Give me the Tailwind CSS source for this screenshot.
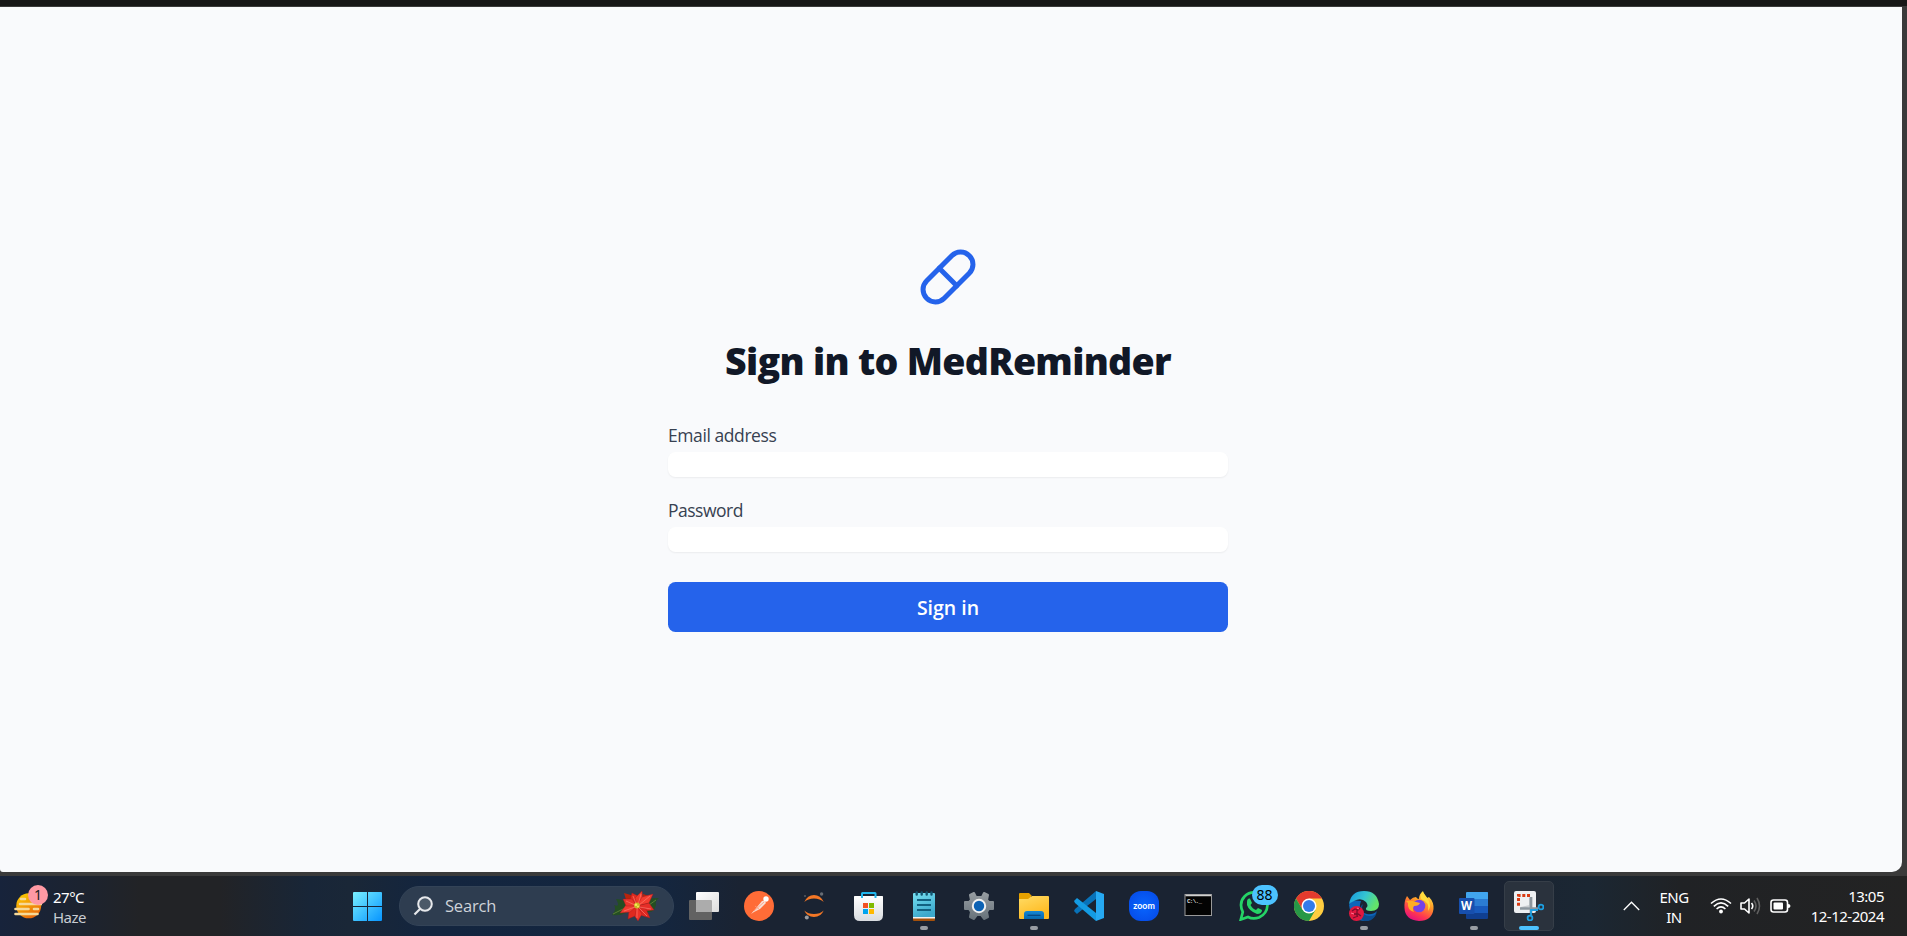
<!DOCTYPE html>
<html lang="en">
<head>
<meta charset="utf-8">
<title>MedReminder</title>
<script src="https://cdn.jsdelivr.net/npm/@tailwindcss/browser@4"></script>
</head>
<body class="flex h-[936px] w-[1907px] flex-col overflow-hidden bg-[#3a3a3a] font-['Open_Sans','Noto_Sans',sans-serif]">
<div class="h-1.5 w-full shrink-0 bg-[#171717]"></div>
<main class="mt-px flex h-[865px] w-[1902px] shrink-0 flex-col items-center rounded-br-[10px] rounded-bl-[3px] bg-[#f9fafc] pr-[6px]">
  <svg class="mt-[240px] size-[60px]" viewBox="0 0 24 24" fill="none" stroke="#2563eb" stroke-width="2" stroke-linecap="round" stroke-linejoin="round"><path d="m10.5 20.5 10-10a4.95 4.95 0 1 0-7-7l-10 10a4.95 4.95 0 1 0 7 7Z"/><path d="m8.5 8.5 7 7"/></svg>
  <h1 class="mt-[31px] h-[45px] text-[37.5px] leading-[45px] font-extrabold tracking-[-0.7px] whitespace-nowrap text-[#111827]">Sign in to MedReminder</h1>
  <form class="mt-[39px] flex w-[560px] flex-col">
    <label class="h-[25px] pt-px text-[17.5px] leading-[25px] font-medium tracking-[-0.42px] text-[#374151]">Email address</label>
    <input type="email" class="mt-[5px] h-[25px] rounded-[7.5px] bg-white shadow-[0_1px_2px_rgba(0,0,0,0.06)]">
    <label class="mt-5 h-[25px] pt-px text-[17.5px] leading-[25px] font-medium tracking-[-0.5px] text-[#374151]">Password</label>
    <input type="password" class="mt-[5px] h-[25px] rounded-[7.5px] bg-white shadow-[0_1px_2px_rgba(0,0,0,0.06)]">
    <button type="button" class="mt-[30px] h-[50px] rounded-[7.5px] bg-[#2563eb] pt-px text-[19.5px] leading-[50px] font-semibold text-white">Sign in</button>
  </form>
</main>
<footer class="mt-1 flex h-[60px] w-full shrink-0 items-center bg-[linear-gradient(90deg,#17233b_0px,#1c2330_80px,#222326_140px,#222326_220px,#182638_310px,#1a2737_350px,#13253f_430px,#14263f_660px,#1a2332_740px,#1a2332_1500px,#1b2733_1590px,#202225_1680px,#232323_1907px)]">
  <div class="relative flex w-[353px] items-center pl-[14px]">
    <svg class="size-[28px]" viewBox="0 0 28 28"><defs><linearGradient id="sun" x1="0" y1="0" x2=".6" y2="1"><stop stop-color="#ffd500"/><stop offset="1" stop-color="#e9690b"/></linearGradient></defs><circle cx="14.7" cy="13.8" r="12.5" fill="url(#sun)"/><g stroke="#f6d999" stroke-width="2.6" stroke-linecap="round"><path d="M7 7h4M6 12h22M1.500 17h13M20 17h4M1.500 22h22"/></g></svg>
    <div class="absolute top-[-1px] left-7 size-5 rounded-full bg-[#ff99a4] text-center font-['Noto_Sans'] text-[14px] leading-5 text-[#222]">1</div>
    <div class="ml-[11px] flex flex-col pt-px font-['Noto_Sans'] text-[15px] leading-5 tracking-[-0.5px] text-white"><span>27°C</span><span class="text-[#c9cdd2]">Haze</span></div>
  </div>
  <svg class="size-[29px]" viewBox="0 0 29 29"><defs><linearGradient id="win" x1="0" y1="0" x2="29" y2="29" gradientUnits="userSpaceOnUse"><stop stop-color="#79f0ff"/><stop offset="1" stop-color="#0795ff"/></linearGradient></defs><path fill="url(#win)" d="M1 0h13v14H0V1q0-1 1-1zM15 0h13q1 0 1 1v13H15zM0 15h14v14H1q-1 0-1-1zM15 15h14v13q0 1-1 1H15z"/></svg>
  <div class="ml-[17px] flex h-10 w-[275px] items-center rounded-full border border-[#334357] bg-[#2e3d50]">
    <svg class="ml-[13px] size-5" viewBox="0 0 20 20" fill="none" stroke="#e7e9ec" stroke-width="2"><circle cx="12" cy="8" r="6.8" fill="#4b5968"/><path d="M7.200 12.800L1.500 18.500" stroke-width="2.200"/></svg>
    <span class="ml-3 pt-px text-[16.500px] tracking-[-0.2px] text-[#ced3d9]">Search</span>
    <svg class="ml-auto mr-[14px] h-[30px] w-[47px]" viewBox="0 0 47 30">
      <path fill="#244e23" d="M0 24Q5 18 2 14Q9 17 4 8Q13 8 19 16Q14 26 0 24zM27 12Q34 7 47 7Q43 10 44 14Q42 22 36 21Q34 25 29 20z"/>
      <path d="M1 23L17 15M30 19L44 9" stroke="#71913d" stroke-width=".7"/>
      <path fill="#ba240c" d="M12 2L22 5L21 12L15 12zM31 3L37 5L32 13z"/>
      <g stroke="#a8171c" stroke-width=".4">
        <path fill="#e02c20" d="M25 15L18 9L20 2L26 5z"/>
        <path fill="#ef3b2b" d="M25 15L23 7L30 0L31 9z"/>
        <path fill="#f23d30" d="M25 15L30 6L41 3L37 12z"/>
        <path fill="#e52e28" d="M25 15L37 12L42 19L33 20z"/>
        <path fill="#dc2822" d="M25 15L34 18L38 27L28 24z"/>
        <path fill="#ed3128" d="M25 15L30 23L26 30L22 24z"/>
        <path fill="#df291f" d="M25 15L23 25L16 28L17 20z"/>
        <path fill="#f03b30" d="M25 15L18 21L8 22L14 14z"/>
        <path fill="#e9352c" d="M25 15L14 15L11 8L20 8z"/>
      </g>
      <path stroke="#ff786b" stroke-width=".7" fill="none" d="M25 15L21 5M26 14L29 3M27 14L38 5M27 16L39 18M27 17L35 25M25 17v10M23 16L12 20M23 14L14 10"/>
      <circle cx="25" cy="14.500" r="2.900" fill="#c9b923"/><circle cx="24" cy="13.700" r="1.300" fill="#f8e859"/><circle cx="26" cy="15.500" r="1" fill="#f8e859"/>
    </svg>
  </div>
  <div class="ml-[2px] grid w-[880px] grid-cols-[repeat(16,55px)] place-items-center">
    <svg class="size-[30px]" viewBox="0 0 30 30"><defs><linearGradient id="tv" x2="1" y2="1"><stop stop-color="#fff"/><stop offset="1" stop-color="#ddd"/></linearGradient></defs><rect y="9" width="23" height="20" rx="1" fill="#626262"/><rect x="7" y="1" width="23" height="20" rx="1" fill="url(#tv)"/><path fill="#acacac" d="M7.500 9H22q1 0 1 1v11H8q-1 0-1-1V9z"/></svg>
    <svg class="size-[30px]" viewBox="0 0 30 30"><circle cx="15" cy="15" r="15" fill="#ff6c37"/><path d="M7 23L13 16L18 10Q21 9 22 12L16 18L10 21z" fill="#f8ded4"/><circle cx="22" cy="8" r="2.700" fill="#fff"/><path d="M10 20L20 11M15 18l-4-3" stroke="#ff9b78" stroke-width=".8"/></svg>
    <svg class="size-[30px]" viewBox="0 0 30 30"><path fill="#f37726" d="M5.300 11Q8.500 4 15 4T24.700 11Q21 7.500 15 7.500T5.300 11zM5.300 19.500Q9 23 15 23T24.700 19.500Q22 26 15 26T5.300 19.500z"/><circle cx="22.600" cy="3" r="1.700" fill="#686d74"/><circle cx="7.800" cy="26.500" r="2" fill="#999ca1"/><circle cx="6" cy="5" r="1" fill="#565b62"/></svg>
    <svg class="size-[30px]" viewBox="0 0 30 30"><defs><linearGradient id="bag" y2="1" x2="0"><stop stop-color="#fff"/><stop offset="1" stop-color="#d9dce0"/></linearGradient></defs><path d="M.5 5h28q.5 0 .5 1v18q0 6-6 6h-17q-6 0-6-6V6q0-1 .5-1z" fill="url(#bag)"/><path d="M8 7V2.500q0-.5.5-.5H21q.5 0 .5.500V7" fill="none" stroke="#21b7ee" stroke-width="2"/><path fill="#f25022" d="M9 12h5v5h-5z"/><path fill="#7fba00" d="M15 12h5v5h-5z"/><path fill="#00a4ef" d="M9 18h5v5h-5z"/><path fill="#ffb900" d="M15 18h5v5h-5z"/></svg>
    <div class="relative size-[30px]"><svg class="size-[30px]" viewBox="0 0 30 30"><defs><linearGradient id="np" y2="1" x2=".4"><stop stop-color="#75e0f1"/><stop offset="1" stop-color="#3ca8cc"/></linearGradient></defs><rect x="4" y="24" width="22" height="6" rx="1" fill="#a4500b"/><path fill="#f2f2f2" d="M4 23h22v4.500H4z"/><path fill="url(#np)" d="M5 2h20q1 0 1 1v23H4V3q0-1 1-1z"/><g stroke="#14546f" stroke-linecap="round" stroke-width="2.400"><path d="M7.700 1.500v2M12.700 1.500v2M17.700 1.500v2M22.500 1.500v2"/></g><path stroke="#126181" stroke-width="1.800" d="M8 9h14M8 14h14M8 19h14"/></svg><i class="absolute top-[35px] left-[11px] h-1 w-2 rounded-full bg-[#989da4]"></i></div>
    <svg class="size-[30px]" viewBox="0 0 30 30"><defs><linearGradient id="gear" y2="1" x2="0"><stop stop-color="#969ca1"/><stop offset="1" stop-color="#68737b"/></linearGradient></defs><path stroke="url(#gear)" fill="url(#gear)" stroke-width="2" stroke-linejoin="round" d="M12 6L10 2L6 4L7 9L5 11H1v7h4l2 3-1 5 4 2 3-4h4l3 4 4-2-1-5 2-3h4v-7h-4l-2-2 1-5-4-2-2 4z"/><circle cx="15" cy="15" r="6.200" fill="#0d62b4" stroke="#f1f1f1" stroke-width="2"/></svg>
    <div class="relative size-[30px]"><svg class="size-[30px]" viewBox="0 0 30 30"><defs><linearGradient id="fold" y2="1" x2=".5"><stop stop-color="#ffdc66"/><stop offset="1" stop-color="#ffb91e"/></linearGradient><linearGradient id="fb" y2="1" x2="0"><stop stop-color="#1687d4"/><stop offset="1" stop-color="#0768ae"/></linearGradient></defs><path fill="#e6a100" d="M1 2h9l3 3h-1v6H0V3q0-1 1-1z"/><path fill="url(#fold)" d="M0 8h9l4-3h16q1 0 1 1v21q0 1-1 1H1q-1 0-1-1z"/><path fill="url(#fb)" d="M5 28v-5q0-3 3-3h14q3 0 3 3v5z"/><path d="M8.500 24.300h13" stroke="#07457d" stroke-width="1.200"/></svg><i class="absolute top-[35px] left-[11px] h-1 w-2 rounded-full bg-[#989da4]"></i></div>
    <svg class="size-[30px]" viewBox="0 0 30 30"><path fill="#0872b9" d="M1 18L22 0v8L4 22l-1 1-3-3z"/><path fill="#149be3" d="M0 10l3-3 19 15v8L1 12z"/><path fill="#26a9f2" d="M22 0l8 3v24l-8 3z"/></svg>
    <svg class="size-[30px]" viewBox="0 0 30 30"><defs><radialGradient id="zm"><stop stop-color="#0866ff"/><stop offset="1" stop-color="#0650ec"/></radialGradient></defs><rect width="30" height="30" rx="12" fill="url(#zm)"/><text x="4.300" y="17.700" font-family="Lato" font-weight="700" font-size="9" textLength="21.500" lengthAdjust="spacingAndGlyphs" fill="#fff">zoom</text></svg>
    <svg class="size-[30px]" viewBox="0 0 30 30"><rect x="1" y="3.500" width="26.500" height="21" fill="#030303" stroke="#999"/><path d="M1.500 4.500H27" stroke="#d0d0d0" stroke-width="1.500"/><text x="3" y="12" font-family="Liberation Mono" font-size="6" font-weight="700" textLength="15" fill="#ddd">C:\._</text></svg>
    <div class="relative size-[30px]"><svg class="size-[30px]" viewBox="0 0 30 30"><path fill="none" stroke="#25d366" stroke-width="2.700" d="M1.800 28.500L3.800 21Q-.5 12 5.500 5.500Q11 0 19 2Q28 5 28.500 14Q28 23 20 26.500Q14 28.500 9 26z"/><path fill="#25d366" d="M8 11Q8 7 11 7.500L13 12L11.500 14Q13.500 18 17 19L19 17L23 19Q23 23 18 23Q10 20 8 14z"/></svg><div class="absolute top-[-6px] left-[13px] h-5 w-[26px] rounded-full bg-[#4cc2ff] text-center font-['Noto_Sans'] text-[14px] leading-5 text-black">88</div></div>
    <svg class="size-[30px]" viewBox="0 0 30 30"><circle cx="15" cy="15" r="15" fill="#ffcd40"/><path fill="#e33b2e" d="M2 7.500A15 15 0 0 1 28 7.500H15L8.500 18.800z"/><path fill="#279847" d="M2 7.500A15 15 0 0 0 15 30l6.500-11.200H8.500z"/><circle cx="15" cy="15" r="7.500" fill="#fff"/><circle cx="15" cy="15" r="6" fill="#337bea"/></svg>
    <div class="relative size-[30px]"><svg class="size-[30px]" viewBox="0 0 30 30"><defs><linearGradient id="ed" x2="1" y2=".4"><stop stop-color="#1595df"/><stop offset=".55" stop-color="#35c5d1"/><stop offset="1" stop-color="#63e36a"/></linearGradient></defs><path fill="#0d65b9" d="M0 14Q2 8 12 10Q8 21 18 23Q24 24 28 20Q25 30 15 30Q2 29 0 14z"/><path fill="url(#ed)" d="M0 13Q2 0 15 0Q28 0 30 13Q30 20 22 20Q16 20 17 17Q20 15 17 11Q12 6 5 10Q1 12 0 13z"/><path fill="#0b4c8f" d="M14 13Q10 25 21 25Q26 25 28 21Q25 31 15 30Q7 25 12 15z"/><circle cx="7.500" cy="22.500" r="7.500" fill="#e0183f"/><path d="M3 20l3-2 3 1 2-2M5 23h4l3 2M4 27l5-2M8 19v7" stroke="#7c0d2b" stroke-width="1.300" fill="none"/><path d="M2 22l3 1M8 17l2 1" stroke="#ff7890"/></svg><i class="absolute top-[35px] left-[11px] h-1 w-2 rounded-full bg-[#989da4]"></i></div>
    <svg class="size-[30px]" viewBox="0 0 30 30"><defs><linearGradient id="ff" x1=".8" y1="0" x2=".3" y2="1"><stop stop-color="#fff44f"/><stop offset=".4" stop-color="#ff9826"/><stop offset=".75" stop-color="#ff3750"/><stop offset="1" stop-color="#e20e82"/></linearGradient></defs><path fill="url(#ff)" d="M3 5L6 9Q9 6 12 6Q13 8 15 8Q15 3 19 0Q20 5 23 7L25 6Q30 11 29.500 18Q28 30 15 30Q1 29 .5 17Q0 10 3 5z"/><circle cx="15" cy="15" r="6.300" fill="#7542e5"/><path fill="#ffad25" d="M2 10Q7 9 12 11L16 12Q15 15 10 15Q8 18 10 21Q3 19 4 12z"/><path fill="#ffdc3d" d="M17 8Q26 11 24 20Q28 15 24 8L19 1Q16 3 17 8z"/></svg>
    <div class="relative size-[30px]"><svg class="size-[30px]" viewBox="0 0 30 30"><path fill="#41a5ee" d="M7 2q0-1 1-1h20.500q.5 0 .5 1v6H7z"/><path fill="#2b7cd3" d="M7 8h22v7H7z"/><path fill="#185abd" d="M7 15h22v7H7z"/><path fill="#103f91" d="M7 22h22v5q0 1-1 1H8q-1 0-1-1z"/><rect y="7" width="15.500" height="16" rx="1" fill="#174fae"/><text x="2" y="19.300" font-family="Open Sans" font-weight="700" font-size="12" textLength="11" lengthAdjust="spacingAndGlyphs" fill="#fff">W</text></svg><i class="absolute top-[35px] left-[11px] h-1 w-2 rounded-full bg-[#989da4]"></i></div>
    <div class="relative flex h-[50px] w-[50px] items-center justify-center rounded-[5px] border border-[#363e48] bg-[#2a323d]"><svg class="size-[30px]" viewBox="0 0 30 30"><rect width="22" height="22" rx="2" fill="#eef0f2"/><path d="M16 4.500H4.500V16" fill="none" stroke="#d83b13" stroke-width="3" stroke-dasharray="3 1.700"/><path d="M16 7v8L7 17" fill="none" stroke="#c8ccd0" stroke-width="2"/><path d="M17 6v16M6 17.500h18" stroke="#8c969e" stroke-width="2.700"/><g fill="none" stroke="#1c9fe2" stroke-width="1.800"><circle cx="27" cy="16" r="2.400"/><circle cx="16" cy="27" r="2.400"/><path d="M17 24v-5h7"/></g></svg><i class="absolute top-[44px] left-[14px] h-1 w-5 rounded-full bg-[#4cc2ff]"></i></div>
  </div>
  <svg class="ml-[67px] h-[10px] w-[17px]" viewBox="0 0 17 10" fill="none" stroke="#fff" stroke-width="1.300"><path d="M.8 9L8.500 1.200L16.200 9"/></svg>
  <div class="ml-[19px] flex w-[30px] flex-col items-center pt-px font-['Noto_Sans'] text-[15px] leading-5 tracking-[-0.5px] text-white"><span>ENG</span><span>IN</span></div>
  <svg class="ml-[21px] h-[18px] w-[22px]" viewBox="0 0 22 18" fill="none" stroke="#fff" stroke-width="1.600"><path d="M1 6.500Q11-2.500 21 6.500M3.800 9.300Q11 2.500 18.200 9.300M6.600 12Q11 7.800 15.400 12"/><circle cx="11" cy="14.500" r="1.900" fill="#fff" stroke="none"/></svg>
  <svg class="ml-2 h-[18px] w-[21px]" viewBox="0 0 21 18" fill="none" stroke="#fff" stroke-width="1.600"><path d="M1 6h3.500L9 2v14l-4.500-4H1z" stroke-linejoin="round"/><path d="M11.500 6Q14 9 11.500 12"/><path stroke="#606060" d="M14 3.500Q18 9 14 14.500M17 1Q22 9 17 17"/></svg>
  <svg class="ml-[9px] h-[14px] w-[21px]" viewBox="0 0 21 14"><rect x="1" y="1" width="16.500" height="12" rx="2.500" fill="none" stroke="#fff" stroke-width="1.600"/><rect x="3.500" y="3.500" width="9.500" height="7" rx="1" fill="#fff"/><path d="M18 5q2.500 0 2.500 2T18 9z" fill="#fff"/></svg>
  <div class="mr-[23px] ml-auto flex flex-col items-end font-['Noto_Sans'] text-[15px] leading-5 tracking-[-0.5px] text-white"><span>13:05</span><span>12-12-2024</span></div>
</footer>
</body>
</html>
